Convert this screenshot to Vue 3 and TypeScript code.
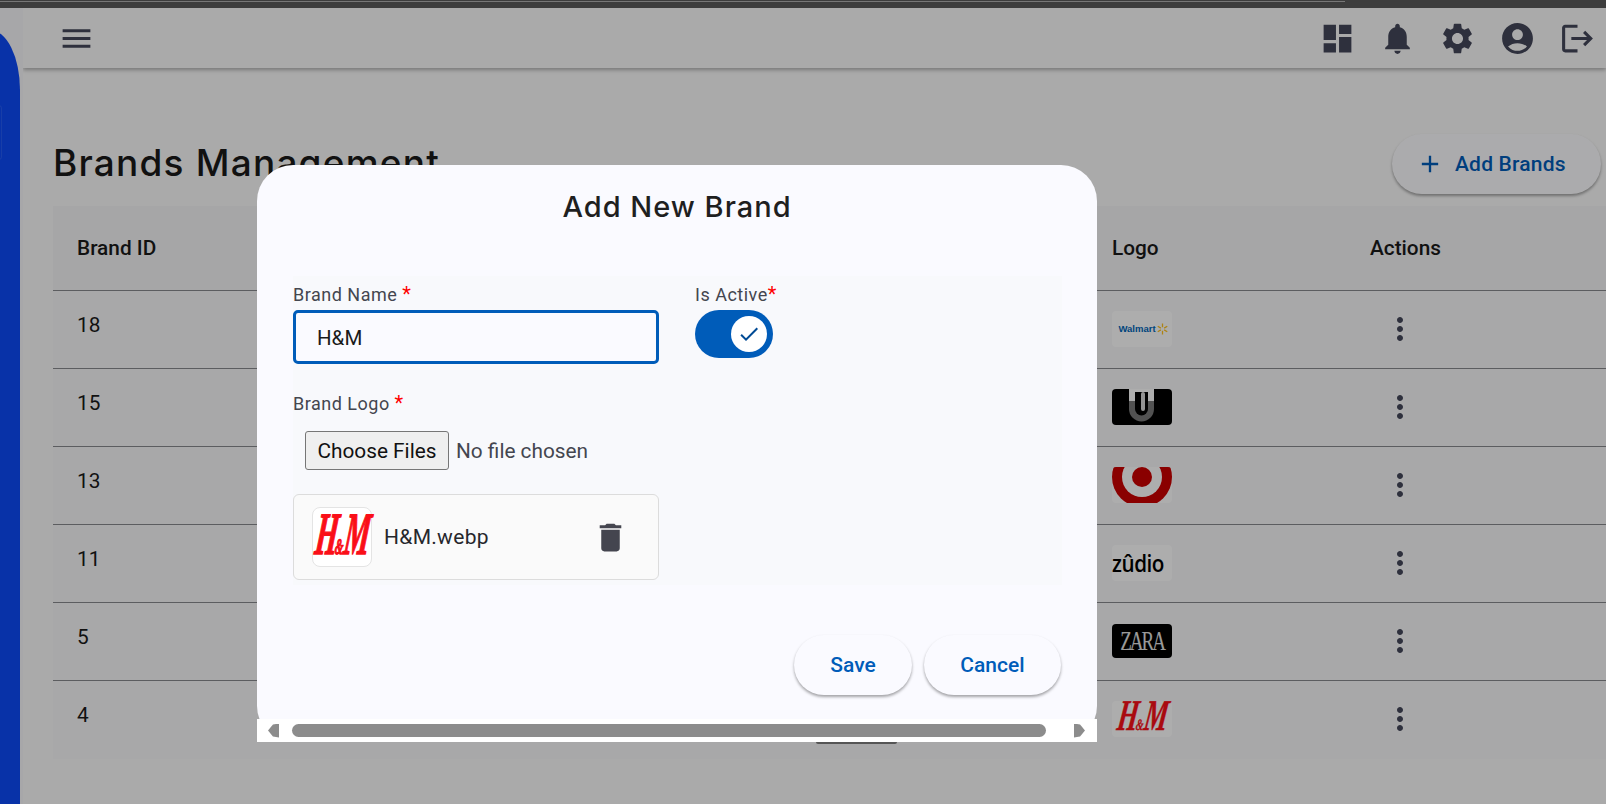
<template>
  <div class="page">
    <div class="chrome-strip"><div class="chrome-line"></div></div>
    <div class="shell">
      <aside class="sidebar">
        <div class="sidebar-fill"><div class="nav-hint"></div></div>
      </aside>
      <div class="main">
        <header class="topbar">
          <svg class="icon menu-icon" viewBox="0 0 24 24"><path :d="icons.menu" /></svg>
          <div class="topbar-actions">
            <svg v-for="name in topIcons" :key="name" class="icon" viewBox="0 0 24 24"><path :d="icons[name]" /></svg>
          </div>
        </header>
        <section class="content">
          <div class="title-row">
            <h1 class="page-title">Brands Management</h1>
            <button class="add-btn">
              <svg class="plus" viewBox="0 0 24 24"><path :d="icons.plus" /></svg>
              <span>Add Brands</span>
            </button>
          </div>
          <div class="table">
            <div class="row head">
              <div class="col-id">Brand ID</div>
              <div class="col-logo">Logo</div>
              <div class="col-actions">Actions</div>
            </div>
            <div v-for="b in brands" :key="b.id" class="row">
              <div class="col-id id-cell">{{ b.id }}</div>
              <div class="col-logo">
                <div class="logo" :class="b.logo">
                  <template v-if="b.logo === 'walmart'">
                    <span class="wm-text">Walmart</span>
                    <svg class="wm-spark" viewBox="0 0 12 12"><path d="M6 0v4M6 8v4M0.8 3l3.4 2M7.8 7l3.4 2M0.8 9l3.4-2M7.8 5l3.4-2" /></svg>
                  </template>
                  <svg v-else-if="b.logo === 'urban'" viewBox="0 0 60 36" class="logo-svg">
                    <rect x="17" y="0" width="25" height="12" fill="#fff" />
                    <path d="M17 12v8a12.5 12.5 0 0 0 25 0v-8z" fill="#7a7a7a" />
                    <path d="M23 3h13v17a6.5 6.5 0 0 1-13 0z" fill="#000" />
                    <rect x="29" y="3" width="4" height="19" rx="2" fill="#d8d8d8" />
                  </svg>
                  <svg v-else-if="b.logo === 'target'" viewBox="0 0 60 36" class="logo-svg">
                    <circle cx="30" cy="10" r="30" fill="#cc0000" />
                    <circle cx="30" cy="10" r="20" fill="#fff" />
                    <circle cx="30" cy="10" r="10" fill="#cc0000" />
                  </svg>
                  <span v-else-if="b.logo === 'zudio'" class="zudio-text">zûdio</span>
                  <span v-else-if="b.logo === 'zara'" class="zara-text">ZARA</span>
                  <span v-else class="hm-text">H<small>&amp;</small>M</span>
                </div>
              </div>
              <div class="col-actions">
                <svg class="icon more" viewBox="0 0 24 24"><path :d="icons.more" /></svg>
              </div>
            </div>
          </div>
        </section>
      </div>
      <div class="backdrop">
        <div class="modal">
          <h2 class="modal-title">Add New Brand</h2>
          <div class="form">
            <div class="form-left">
              <label class="field-label">Brand Name <span class="req">*</span></label>
              <input class="text-input" type="text" value="H&M" />
              <label class="field-label logo-label">Brand Logo <span class="req">*</span></label>
              <input class="file-input" type="file" multiple />
              <div class="file-card">
                <div class="thumb">
                  <span class="hm-text">H<small>&amp;</small>M</span>
                </div>
                <span class="file-name">H&amp;M.webp</span>
                <svg class="trash" viewBox="0 0 24 24"><path :d="icons.trash" /></svg>
              </div>
            </div>
            <div class="form-right">
              <label class="field-label">Is Active<span class="req">*</span></label>
              <div class="switch">
                <div class="knob">
                  <svg viewBox="0 0 24 24"><path :d="icons.check" /></svg>
                </div>
              </div>
            </div>
          </div>
          <div class="modal-actions">
            <button class="pill save">Save</button>
            <button class="pill cancel">Cancel</button>
          </div>
          <div class="hscroll">
            <span class="arrow left"></span>
            <div class="thumb-bar"></div>
            <span class="arrow right"></span>
          </div>
          <div class="peek"></div>
        </div>
      </div>
    </div>
  </div>
</template>

<script setup lang="ts">
const icons: Record<string, string> = {
  menu: 'M3 18h18v-2H3v2zm0-5h18v-2H3v2zm0-7v2h18V6H3z',
  dashboard: 'M3 13h8V3H3v10zm0 8h8v-6H3v6zm10 0h8V11h-8v10zm0-18v6h8V3h-8z',
  bell: 'M12 22c1.1 0 2-.9 2-2h-4c0 1.1.89 2 2 2zm6-6v-5c0-3.07-1.64-5.64-4.5-6.32V4c0-.83-.67-1.5-1.5-1.5s-1.5.67-1.5 1.5v.68C7.63 5.36 6 7.92 6 11v5l-2 2v1h16v-1l-2-2z',
  gear: 'M19.14 12.94c.04-.3.06-.61.06-.94 0-.32-.02-.64-.07-.94l2.03-1.58c.18-.14.23-.41.12-.61l-1.92-3.32c-.12-.22-.37-.29-.59-.22l-2.39.96c-.5-.38-1.03-.7-1.62-.94l-.36-2.54c-.04-.24-.24-.41-.48-.41h-3.84c-.24 0-.43.17-.47.41l-.36 2.54c-.59.24-1.13.57-1.62.94l-2.39-.96c-.22-.08-.47 0-.59.22L2.74 8.87c-.12.21-.08.47.12.61l2.03 1.58c-.05.3-.09.63-.09.94s.02.64.07.94l-2.03 1.58c-.18.14-.23.41-.12.61l1.92 3.32c.12.22.37.29.59.22l2.39-.96c.5.38 1.03.7 1.62.94l.36 2.54c.05.24.24.41.48.41h3.84c.24 0 .44-.17.47-.41l.36-2.54c.59-.24 1.13-.56 1.62-.94l2.39.96c.22.08.47 0 .59-.22l1.92-3.32c.12-.22.07-.47-.12-.61l-2.01-1.58zM12 15.6c-1.98 0-3.6-1.62-3.6-3.6s1.62-3.6 3.6-3.6 3.6 1.62 3.6 3.6-1.62 3.6-3.6 3.6z',
  account: 'M12 2C6.48 2 2 6.48 2 12s4.48 10 10 10 10-4.48 10-10S17.52 2 12 2zm0 4c1.93 0 3.5 1.57 3.5 3.5S13.93 13 12 13s-3.5-1.57-3.5-3.5S10.07 6 12 6zm0 14c-2.03 0-4.43-.82-6.14-2.88C7.55 15.8 9.68 15 12 15s4.45.8 6.14 2.12C16.43 19.18 14.03 20 12 20z',
  logout: 'M17 7l-1.41 1.41L18.17 11H8v2h10.17l-2.58 2.58L17 17l5-5zM4 5h8V3H4c-1.1 0-2 .9-2 2v14c0 1.1.9 2 2 2h8v-2H4V5z',
  plus: 'M19 13h-6v6h-2v-6H5v-2h6V5h2v6h6v2z',
  more: 'M12 8c1.1 0 2-.9 2-2s-.9-2-2-2-2 .9-2 2 .9 2 2 2zm0 2c-1.1 0-2 .9-2 2s.9 2 2 2 2-.9 2-2-.9-2-2-2zm0 6c-1.1 0-2 .9-2 2s.9 2 2 2 2-.9 2-2-.9-2-2-2z',
  trash: 'M6 19c0 1.1.9 2 2 2h8c1.1 0 2-.9 2-2V7H6v12zM19 4h-3.5l-1-1h-5l-1 1H5v2h14V4z',
  check: 'M9 16.17L4.83 12l-1.42 1.41L9 19 21 7l-1.41-1.41z'
}

const topIcons = ['dashboard', 'bell', 'gear', 'account', 'logout']

const brands = [
  { id: 18, logo: 'walmart' },
  { id: 15, logo: 'urban' },
  { id: 13, logo: 'target' },
  { id: 11, logo: 'zudio' },
  { id: 5, logo: 'zara' },
  { id: 4, logo: 'hm' }
]
</script>

<style>
html,
body {
  margin: 0;
  overflow: hidden;
}
</style>

<style scoped>
.page {
  width: 1606px;
  height: 804px;
  overflow: hidden;
  display: flex;
  flex-direction: column;
  font-family: Roboto, "Liberation Sans", sans-serif;
  background: #3f3f3f;
}
.chrome-strip {
  height: 8px;
  flex: none;
  background: #3d3d3d;
  padding-top: 1px;
  box-sizing: border-box;
}
.chrome-line {
  height: 1px;
  width: 1345px;
  background: #777;
}
.shell {
  flex: 1;
  display: flex;
  position: relative;
  background: #fbfbfb;
  min-height: 0;
}
.sidebar {
  width: 23px;
  flex: none;
  background: #f7f7f9;
  padding-top: 22px;
  box-sizing: border-box;
}
.sidebar-fill {
  width: 30px;
  margin-left: -10px;
  height: 100%;
  background: #0c4af8;
  border-top-right-radius: 30px 60px;
  padding-top: 75px;
  box-sizing: border-box;
}
.nav-hint {
  width: 12px;
  height: 55px;
  box-sizing: border-box;
  border: 1px solid rgba(255, 255, 255, 0.1);
  border-radius: 3px;
}
.main {
  flex: 1;
  min-width: 0;
  display: flex;
  flex-direction: column;
}
.topbar {
  height: 60px;
  flex: none;
  display: flex;
  align-items: center;
  justify-content: space-between;
  padding: 0 10px 0 35px;
  background: #fbfbfb;
  box-shadow: 0 2px 4px rgba(0, 0, 0, 0.3);
  clip-path: inset(0 0 -10px 0);
}
.icon {
  width: 37px;
  height: 37px;
  fill: #44475a;
  display: block;
}
.topbar-actions {
  display: flex;
  gap: 23px;
}
.content {
  padding: 66px 0 0 30px;
}
.title-row {
  display: flex;
  justify-content: space-between;
  align-items: flex-start;
  height: 72px;
  padding-right: 5px;
}
.page-title {
  margin: 0;
  line-height: 58px;
  font-family: Inter, sans-serif;
  font-weight: 500;
  font-size: 37px;
  letter-spacing: 1.2px;
  color: #1a1a1a;
}
.add-btn {
  display: flex;
  align-items: center;
  width: 209px;
  height: 60px;
  box-sizing: border-box;
  padding: 0 0 0 24px;
  gap: 11px;
  border: none;
  border-radius: 30px;
  background: #fdfdff;
  box-shadow: 0 2px 3px rgba(0, 0, 0, 0.35);
  font-family: Roboto, sans-serif;
  font-weight: 500;
  font-size: 21px;
  letter-spacing: 0.2px;
  color: #005cb9;
}
.plus {
  width: 28px;
  height: 28px;
  fill: #005cb9;
}
.table {
  background: #f8f8f9;
  color: #1a1a1a;
}
.row {
  display: flex;
  align-items: center;
  height: 78px;
  border-bottom: 1px solid #888a8e;
  box-sizing: border-box;
  padding-left: 24px;
  padding-bottom: 2px;
  font-size: 20.8px;
}
.row:last-child {
  border-bottom: none;
}
.row.head {
  height: 85px;
  padding-bottom: 0;
  font-weight: 500;
  background: #f5f5f6;
}
.col-id {
  width: 1035px;
  flex: none;
}
.id-cell {
  margin-top: -8px;
}
.col-logo {
  width: 258px;
  flex: none;
}
.more {
  width: 36px;
  height: 36px;
  margin-left: 12px;
}
.logo {
  width: 60px;
  height: 36px;
  border-radius: 4px;
  display: flex;
  align-items: center;
  justify-content: center;
  overflow: hidden;
  background: #ffffff;
}
.logo-svg {
  width: 60px;
  height: 36px;
  display: block;
}
.walmart {
  padding-left: 2px;
  box-sizing: border-box;
}
.wm-text {
  font-family: "Liberation Sans", sans-serif;
  font-weight: 700;
  font-size: 9.5px;
  color: #0066b8;
}
.wm-spark {
  width: 11px;
  height: 12px;
  margin-left: 1px;
  stroke: #ffc220;
  stroke-width: 1.4;
  fill: none;
}
.urban {
  background: #000;
}
.zudio {
  justify-content: flex-start;
}
.zudio-text {
  font-family: "Open Sans", sans-serif;
  font-weight: 600;
  font-size: 24px;
  color: #000;
  letter-spacing: -0.5px;
  transform: scaleX(0.86);
  transform-origin: left center;
}
.zara {
  background: #000;
  height: 34px;
  margin-top: 1px;
}
.zara-text {
  color: #e4e4e4;
  font-family: "Liberation Serif", serif;
  font-size: 28px;
  letter-spacing: -3px;
  transform: scaleX(0.68);
}
.hm {
  padding-top: 2px;
  box-sizing: border-box;
  overflow: visible;
}
.hm-text {
  display: inline-block;
  color: #fa0f18;
  font-family: "Liberation Serif", serif;
  font-style: italic;
  font-weight: 700;
  font-size: 44px;
  line-height: 36px;
  letter-spacing: -2px;
  -webkit-text-stroke: 0.4px #fa0f18;
  transform: scaleX(0.6) skewX(-14deg);
  white-space: nowrap;
}
.hm-text small {
  font-size: 16px;
  letter-spacing: 0;
}
.backdrop {
  position: absolute;
  inset: 0;
  background: rgba(0, 0, 0, 0.32);
  padding: 157px 0 0 257px;
  box-sizing: border-box;
}
.modal {
  position: relative;
  width: 840px;
  height: 577px;
  box-sizing: border-box;
  padding: 0 35px;
  background: #fafaff;
  border-radius: 36px;
}
.modal-title {
  margin: 0;
  padding-top: 22px;
  height: 62px;
  box-sizing: border-box;
  line-height: 40px;
  text-align: center;
  font-family: Inter, sans-serif;
  font-weight: 500;
  font-size: 29px;
  letter-spacing: 1px;
  color: #1f1f1f;
}
.form {
  margin-top: 49px;
  margin-left: 1px;
  padding-top: 8px;
  padding-bottom: 5px;
  display: flex;
  gap: 36px;
  background: #f8f9fc;
}
.form-left {
  width: 366px;
  display: flex;
  flex-direction: column;
}
.form-right {
  display: flex;
  flex-direction: column;
}
.field-label {
  height: 20px;
  line-height: 20px;
  font-size: 18px;
  letter-spacing: 0.5px;
  color: #44464f;
  margin-bottom: 6px;
}
.req {
  color: #f00;
  font-size: 20px;
}
.text-input {
  height: 54px;
  box-sizing: border-box;
  border: 3px solid #005cb9;
  border-radius: 5px;
  padding: 2px 21px 0;
  background: #fafaff;
  outline: none;
  font-family: Roboto, sans-serif;
  font-size: 20.5px;
  color: #1a1a1a;
}
.logo-label {
  margin-top: 29px;
  margin-bottom: 18px;
}
.file-input {
  margin-left: 12px;
  height: 39px;
  font-family: Roboto, sans-serif;
  font-size: 20.8px;
  color: #44464f;
}
.file-input::file-selector-button {
  height: 39px;
  width: 144px;
  padding: 0;
  font-family: Roboto, sans-serif;
  font-size: 20.8px;
  color: #111;
  background: #efefef;
  border: 1px solid #767676;
  border-radius: 3px;
  margin-right: 7px;
}
.file-card {
  margin-top: 24px;
  height: 86px;
  box-sizing: border-box;
  border: 1px solid #dcdcdc;
  border-radius: 6px;
  background: #fafafa;
  display: flex;
  align-items: center;
  padding: 0 18px;
}
.thumb {
  width: 60px;
  height: 60px;
  flex: none;
  box-sizing: border-box;
  border: 1px solid #e4e4e4;
  border-radius: 8px;
  padding-top: 7px;
  background: #fff;
  display: flex;
  align-items: center;
  justify-content: center;
}
.thumb .hm-text {
  font-size: 60px;
  line-height: 50px;
  letter-spacing: -4px;
  -webkit-text-stroke: 1.4px #fa0f18;
  transform: scaleX(0.48) skewX(-14deg);
}
.thumb .hm-text small {
  font-size: 22px;
}
.file-name {
  margin-left: 12px;
  font-size: 21px;
  letter-spacing: 0.3px;
  color: #26272c;
}
.trash {
  width: 37px;
  height: 37px;
  margin-left: auto;
  margin-right: 11px;
  fill: #44454f;
}
.switch {
  width: 78px;
  height: 48px;
  box-sizing: border-box;
  border-radius: 24px;
  background: #005cb9;
  display: flex;
  align-items: center;
  justify-content: flex-end;
  padding-right: 6px;
}
.knob {
  width: 36px;
  height: 36px;
  border-radius: 50%;
  background: #fff;
  display: flex;
  align-items: center;
  justify-content: center;
}
.knob svg {
  width: 24px;
  height: 24px;
  fill: #004a95;
}
.modal-actions {
  margin-top: 50px;
  padding-right: 1px;
  display: flex;
  justify-content: flex-end;
  gap: 12px;
}
.pill {
  height: 60px;
  border: none;
  border-radius: 30px;
  background: #fafaff;
  box-shadow: 0 2px 3px rgba(0, 0, 0, 0.35);
  font-family: Roboto, sans-serif;
  font-weight: 500;
  font-size: 21px;
  color: #005cb9;
}
.save {
  width: 118px;
}
.cancel {
  width: 137px;
}
.hscroll {
  position: absolute;
  left: 0;
  right: 0;
  bottom: 0;
  height: 23px;
  background: #fff;
  display: flex;
  align-items: center;
  justify-content: space-between;
  padding: 0 12px 0 11px;
}
.thumb-bar {
  width: 754px;
  height: 13px;
  margin-right: 15px;
  border-radius: 7px;
  background: #8c8c8c;
}
.arrow {
  width: 11px;
  height: 14px;
  background: #8c8c8c;
}
.arrow.left {
  clip-path: polygon(0 50%, 45% 8%, 100% 0, 100% 100%, 45% 92%);
}
.arrow.right {
  clip-path: polygon(100% 50%, 55% 8%, 0 0, 0 100%, 55% 92%);
}
.peek {
  position: absolute;
  top: 100%;
  left: 559px;
  width: 81px;
  height: 2px;
  border-radius: 0 0 3px 3px;
  background: #555;
}
</style>
